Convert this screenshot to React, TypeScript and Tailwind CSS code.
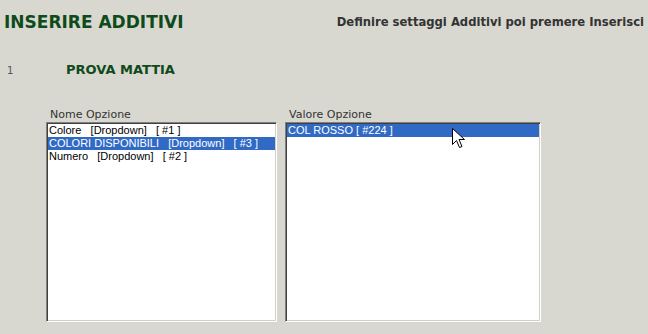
import React from "react";

const boxCls =
  "bg-white border border-t-[#808080] border-l-[#808080] border-r-[#ffffff] border-b-[#ffffff] shadow-[inset_1px_1px_0_#404040,inset_-1px_-1px_0_#d4d0c8] p-[1px] h-[200px] overflow-hidden";

function Item({ text, selected }: { text: string; selected?: boolean }) {
  return (
    <div
      className={
        "h-[13px] leading-[13px] text-[11px] whitespace-pre pl-[1px] " +
        (selected ? "bg-[#316ac5] text-white" : "text-black")
      }
      style={{ fontFamily: '"Liberation Sans", Arial, sans-serif' }}
    >
      {text}
    </div>
  );
}

export default function App() {
  return (
    <div
      className="w-[648px] h-[334px] bg-[#d8d8d0] relative overflow-hidden"
      style={{ fontFamily: '"DejaVu Sans", Verdana, sans-serif' }}
    >
      <div className="flex justify-between items-start pl-[4px] pr-[4px] pt-[11px]">
        <div className="text-[17px] font-bold text-[#0f4a1a] leading-[22px]">
          INSERIRE ADDITIVI
        </div>
        <div className="text-[11.6px] font-bold text-[#333333] leading-[16px] pt-[3px] whitespace-nowrap">
          Definire settaggi Additivi poi premere Inserisci
        </div>
      </div>
      <div className="flex items-center mt-[30px] h-[14px]">
        <div className="w-[66px] pl-[7px] text-[10px] text-[#555555]">1</div>
        <div className="text-[13px] font-bold text-[#0f4a1a]">PROVA MATTIA</div>
      </div>
      <div className="flex gap-[8px] pl-[46px] mt-[31px]">
        <div className="w-[231px] flex flex-col">
          <div className="text-[11px] text-[#333333] leading-[14px] pl-[4px]">Nome Opzione</div>
          <div className={boxCls}>
            <Item text="Colore   [Dropdown]   [ #1 ]" />
            <Item text="COLORI DISPONIBILI   [Dropdown]   [ #3 ]" selected />
            <Item text="Numero   [Dropdown]   [ #2 ]" />
          </div>
        </div>
        <div className="w-[256px] flex flex-col">
          <div className="text-[11px] text-[#333333] leading-[14px] pl-[4px]">Valore Opzione</div>
          <div className={boxCls}>
            <Item text="COL ROSSO [ #224 ]" selected />
          </div>
        </div>
      </div>
      <svg
        className="absolute left-[452px] top-[128px]"
        width="14"
        height="22"
        viewBox="0 0 14 22"
      >
        <path
          d="M0.5 0.5 L0.5 16.5 L4.5 12.5 L7.5 19.5 L10 18.5 L7 11.5 L12.5 11.5 Z"
          fill="white"
          stroke="black"
          strokeWidth="1"
          strokeLinejoin="miter"
        />
      </svg>
    </div>
  );
}
